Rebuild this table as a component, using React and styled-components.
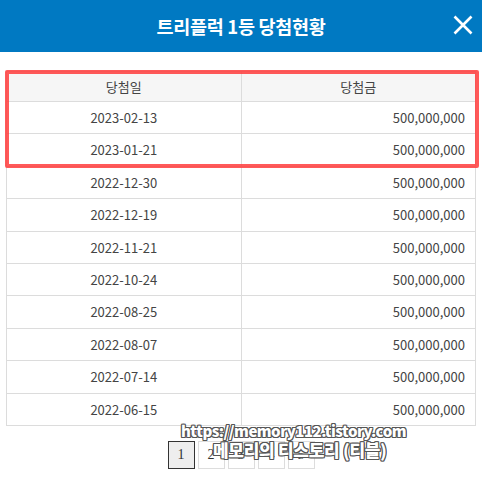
import React from "react";
import styled, { createGlobalStyle } from "styled-components";

const Global = createGlobalStyle`
  html, body { margin: 0; padding: 0; background: #fff; }
  body { font-family: "Noto Sans CJK KR", "Noto Sans", sans-serif; }
`;

const Page = styled.div`
  position: relative;
  width: 482px;
  height: 484px;
  overflow: hidden;
`;

const Header = styled.header`
  position: relative;
  height: 52px;
  background: #0079c2;
  display: flex;
  align-items: center;
  justify-content: center;
`;

const Title = styled.h1`
  margin: 0;
  color: #fff;
  font-size: 18.5px;
  font-weight: 700;
  letter-spacing: -0.3px;
`;

const Close = styled.button`
  position: absolute;
  right: 8px;
  top: 14px;
  width: 22px;
  height: 22px;
  padding: 0;
  border: 0;
  background: none;
  display: flex;
  align-items: center;
  justify-content: center;
`;

const Body = styled.main`
  padding: 19px 6px 0;
`;

const TableWrap = styled.div`
  position: relative;
`;

const Table = styled.table`
  width: 100%;
  border-collapse: collapse;
  table-layout: fixed;
  font-size: 13px;
  color: #444;
`;

const Th = styled.th`
  background: #f6f6f6;
  border: 1px solid #dcdcdc;
  font-weight: 400;
  padding: 5px 10px;
  line-height: 19px;
  text-align: center;
`;

const Td = styled.td`
  border: 1px solid #dcdcdc;
  padding: 6px 10px;
  line-height: 19.4px;
  text-align: ${(p) => (p.$right ? "right" : "center")};
`;

const Highlight = styled.div`
  position: absolute;
  left: -1px;
  top: -1px;
  width: 474px;
  height: 98px;
  box-sizing: border-box;
  border: 4px solid rgba(255, 60, 60, 0.85);
  border-radius: 2px;
  pointer-events: none;
`;

const Pager = styled.nav`
  display: flex;
  justify-content: center;
  gap: 3px;
  margin-top: 15px;
`;

const PageBtn = styled.span`
  width: 27px;
  height: 28px;
  box-sizing: border-box;
  display: flex;
  align-items: center;
  justify-content: center;
  font-family: "Liberation Serif", serif;
  font-size: 14px;
  color: #333;
  background: ${(p) => (p.$active ? "#eeeeee" : "#fff")};
  border: 1px solid ${(p) => (p.$active ? "#333" : "#ddd")};
`;

const Watermark = styled.div`
  position: absolute;
  left: ${(p) => p.$left}px;
  top: ${(p) => p.$top}px;
  font-family: "Noto Sans CJK KR", sans-serif;
  font-weight: 900;
  font-size: ${(p) => p.$size}px;
  line-height: 1;
  color: #fff;
  letter-spacing: ${(p) => p.$ls}px;
  white-space: nowrap;
  text-shadow: -1px -1px 0 #555, 1px -1px 0 #555, -1px 1px 0 #555, 1px 1px 0 #555,
    0 -1px 0 #555, 0 1px 0 #555, -1px 0 0 #555, 1px 0 0 #555;
  pointer-events: none;
`;

const rows = [
  "2023-02-13",
  "2023-01-21",
  "2022-12-30",
  "2022-12-19",
  "2022-11-21",
  "2022-10-24",
  "2022-08-25",
  "2022-08-07",
  "2022-07-14",
  "2022-06-15",
];

export default function App() {
  return (
    <Page>
      <Global />
      <Header>
        <Title>트리플럭 1등 당첨현황</Title>
        <Close aria-label="닫기">
          <svg width="20" height="20" viewBox="0 0 20 20">
            <path d="M1.5 1.5 L18.5 18.5 M18.5 1.5 L1.5 18.5" stroke="#fff" strokeWidth="2.6" fill="none" />
          </svg>
        </Close>
      </Header>
      <Body>
        <TableWrap>
          <Table>
            <thead>
              <tr>
                <Th>당첨일</Th>
                <Th>당첨금</Th>
              </tr>
            </thead>
            <tbody>
              {rows.map((d) => (
                <tr key={d}>
                  <Td>{d}</Td>
                  <Td $right>500,000,000</Td>
                </tr>
              ))}
            </tbody>
          </Table>
          <Highlight />
        </TableWrap>
        <Pager>
          {[1, 2, 3, 4, 5].map((n) => (
            <PageBtn key={n} $active={n === 1}>{n}</PageBtn>
          ))}
        </Pager>
      </Body>
      <Watermark $left={181} $top={423} $size={15} $ls={-0.5}>https://memory112.tistory.com</Watermark>
      <Watermark $left={213} $top={441} $size={17} $ls={-0.3}>메모리의 티스토리 (티블)</Watermark>
    </Page>
  );
}
